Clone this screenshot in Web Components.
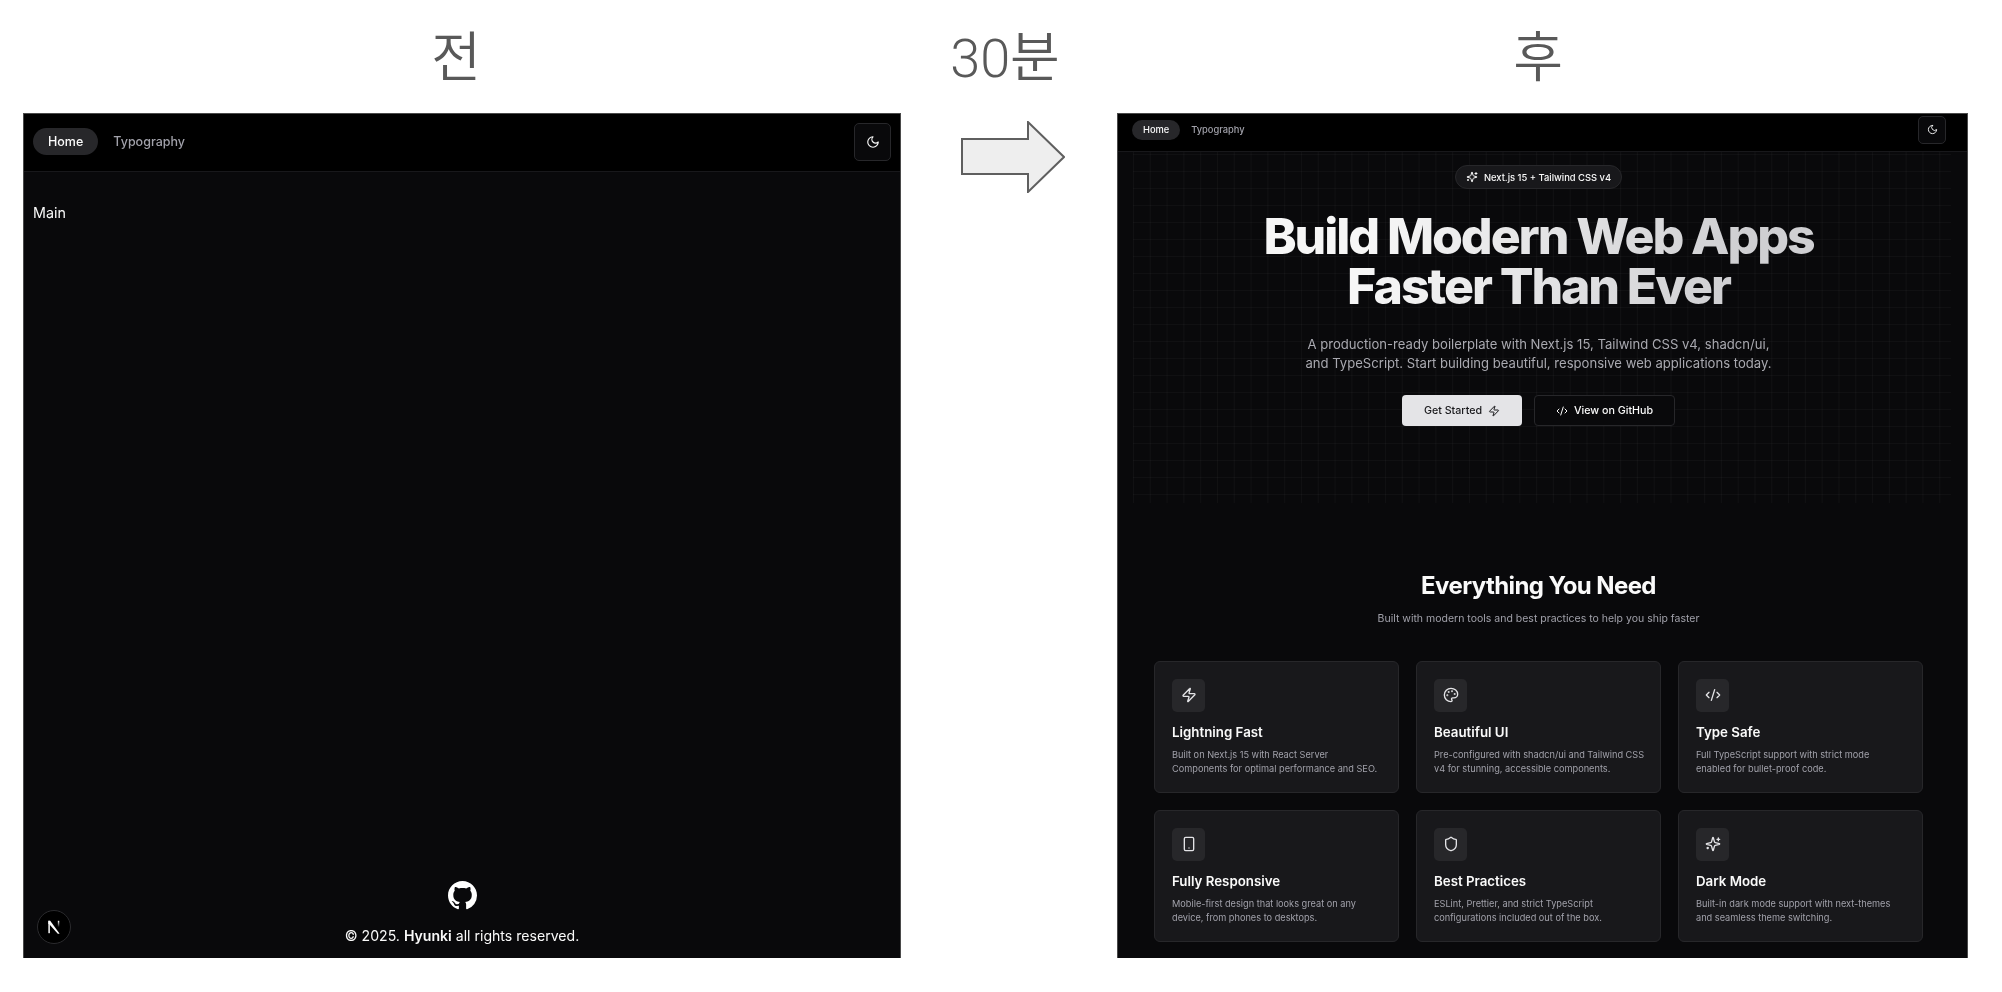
<!DOCTYPE html>
<html lang="ko">
<head>
<meta charset="utf-8">
<title>전 / 후</title>
<style>
  html, body { margin: 0; background: #fff; height: 100%; overflow: hidden; }
  body { font-family: Inter, "Noto Sans", sans-serif; }
</style>
</head>
<body>
<compare-page>
  <slide-caption slot="cap-before" style="--shift:-12px">전</slide-caption>
  <slide-caption slot="cap-mid" style="--shift:-8px">30분</slide-caption>
  <slide-caption slot="cap-after" style="--shift:-9px">후</slide-caption>
  <before-panel slot="before"></before-panel>
  <block-arrow slot="arrow"></block-arrow>
  <after-panel slot="after"></after-panel>
</compare-page>

<script>
const ICONS = {
  moon: '<path d="M12 3a6 6 0 0 0 9 9 9 9 0 1 1-9-9Z"/>',
  zap: '<path d="M4 14a1 1 0 0 1-.78-1.63l9.9-10.2a.5.5 0 0 1 .86.46l-1.92 6.02A1 1 0 0 0 13 10h7a1 1 0 0 1 .78 1.63l-9.9 10.2a.5.5 0 0 1-.86-.46l1.92-6.02A1 1 0 0 0 11 14z"/>',
  palette: '<circle cx="13.5" cy="6.5" r=".5" fill="currentColor"/><circle cx="17.5" cy="10.5" r=".5" fill="currentColor"/><circle cx="8.5" cy="7.5" r=".5" fill="currentColor"/><circle cx="6.5" cy="12.5" r=".5" fill="currentColor"/><path d="M12 2C6.5 2 2 6.5 2 12s4.5 10 10 10c.926 0 1.648-.746 1.648-1.688 0-.437-.18-.835-.437-1.125-.29-.289-.438-.652-.438-1.125a1.64 1.64 0 0 1 1.668-1.668h1.996c3.051 0 5.555-2.503 5.555-5.554C21.965 6.012 17.461 2 12 2z"/>',
  code: '<path d="m18 16 4-4-4-4"/><path d="m6 8-4 4 4 4"/><path d="m14.5 4-5 16"/>',
  phone: '<rect width="14" height="20" x="5" y="2" rx="2" ry="2"/><path d="M12 18h.01"/>',
  shield: '<path d="M20 13c0 5-3.5 7.5-7.66 8.95a1 1 0 0 1-.67-.01C7.5 20.5 4 18 4 13V6a1 1 0 0 1 1-1c2 0 4.5-1.2 6.24-2.72a1.17 1.17 0 0 1 1.52 0C14.51 3.81 17 5 19 5a1 1 0 0 1 1 1z"/>',
  sparkles: '<path d="M9.937 15.5A2 2 0 0 0 8.5 14.063l-6.135-1.582a.5.5 0 0 1 0-.962L8.5 9.936A2 2 0 0 0 9.937 8.5l1.582-6.135a.5.5 0 0 1 .963 0L14.063 8.5A2 2 0 0 0 15.5 9.937l6.135 1.581a.5.5 0 0 1 0 .964L15.5 14.063a2 2 0 0 0-1.437 1.437l-1.582 6.135a.5.5 0 0 1-.963 0z"/><path d="M20 3v4"/><path d="M22 5h-4"/><path d="M4 17v2"/><path d="M5 18H3"/>'
};

class UiIcon extends HTMLElement {
  connectedCallback() {
    const size = this.getAttribute("size") || 16;
    const name = this.getAttribute("name");
    this.attachShadow({ mode: "open" }).innerHTML = `
      <style>:host { display: inline-flex; flex: none; } svg { display: block; }</style>
      <svg xmlns="http://www.w3.org/2000/svg" width="${size}" height="${size}" viewBox="0 0 24 24" fill="none"
        stroke="currentColor" stroke-width="2" stroke-linecap="round" stroke-linejoin="round">${ICONS[name]}</svg>`;
  }
}
customElements.define("ui-icon", UiIcon);

class ComparePage extends HTMLElement {
  constructor() {
    super();
    this.attachShadow({ mode: "open" }).innerHTML = `
      <style>
        :host {
          display: grid;
          grid-template-columns: 878px 216px 851px;
          grid-template-rows: 113px 845px;
          padding-left: 23px;
        }
        .mid { display: flex; justify-content: flex-start; }
      </style>
      <slot name="cap-before"></slot>
      <slot name="cap-mid"></slot>
      <slot name="cap-after"></slot>
      <slot name="before"></slot>
      <div class="mid"><slot name="arrow"></slot></div>
      <slot name="after"></slot>`;
  }
}
customElements.define("compare-page", ComparePage);

class SlideCaption extends HTMLElement {
  constructor() {
    super();
    this.attachShadow({ mode: "open" }).innerHTML = `
      <style>
        :host {
          display: flex;
          justify-content: center;
          align-items: flex-start;
          padding-top: 23px;
          padding-right: calc(var(--shift) * -1);
          font: 350 54px/72px Roboto, "Noto Sans CJK KR", sans-serif;
          color: #595959;
        }
      </style>
      <slot></slot>`;
  }
}
customElements.define("slide-caption", SlideCaption);

class BlockArrow extends HTMLElement {
  constructor() {
    super();
    this.attachShadow({ mode: "open" }).innerHTML = `
      <style>
        :host { display: block; padding: 8px 0 0 60px; }
        svg { display: block; }
      </style>
      <svg xmlns="http://www.w3.org/2000/svg" width="104" height="72" viewBox="0 0 104 72">
        <path d="M1 18H67V1L103 36 67 71V53H1Z" fill="#eeeeee" stroke="#5f5f5f" stroke-width="2"/>
      </svg>`;
  }
}
customElements.define("block-arrow", BlockArrow);

// nav bar, sizes come from custom properties because it is used at two scales
class TopNav extends HTMLElement {
  constructor() {
    super();
    this.attachShadow({ mode: "open" }).innerHTML = `
      <style>
        :host {
          display: flex;
          align-items: center;
          justify-content: space-between;
          box-sizing: border-box;
          height: var(--nav-h);
          padding: 0 var(--nav-pr) var(--nav-pb) var(--nav-pl);
          background: #000;
          border-bottom: 1px solid #18181b;
          font-size: var(--nav-fs);
          font-weight: 500;
        }
        .links { display: flex; align-items: center; gap: var(--nav-gap); }
        a {
          display: block;
          height: var(--pill-h);
          line-height: var(--pill-h);
          padding: 0 var(--pill-px);
          border-radius: 999px;
          color: #a1a1aa;
        }
        a.on { background: #27272a; color: #fafafa; }
        button {
          display: flex;
          align-items: center;
          justify-content: center;
          width: var(--btn);
          height: var(--btn-h);
          padding: 0;
          color: #fafafa;
          background: #09090b;
          border: 1px solid #27272a;
          border-radius: 5px;
        }
      </style>
      <div class="links"><a class="on">Home</a><a>Typography</a></div>
      <button aria-label="Toggle theme"><slot></slot></button>`;
  }
}
customElements.define("top-nav", TopNav);

class BeforePanel extends HTMLElement {
  constructor() {
    super();
    this.attachShadow({ mode: "open" }).innerHTML = `
      <style>
        :host {
          display: flex;
          flex-direction: column;
          box-sizing: border-box;
          height: 845px;
          position: relative;
          border: 1px solid #4a4a4a;
          border-bottom: 0;
          background: #09090b;
          color: #fafafa;
          filter: blur(.3px);
        }
        top-nav {
          --nav-h: 58px; --nav-pl: 9px; --nav-pr: 9px; --nav-pb: 2px; --nav-fs: 12.5px; --nav-gap: 0px;
          --pill-h: 27px; --pill-px: 15px; --btn: 37px; --btn-h: 38px;
        }
        main { flex: 1; padding: 30px 9px 0; font-size: 14.3px; line-height: 22px; }
        footer {
          display: flex;
          flex-direction: column;
          align-items: center;
          gap: 15px;
          padding-bottom: 11px;
          font-size: 14.1px;
          line-height: 22px;
        }
        footer svg { display: block; }
        b { font-weight: 600; }
        .dev {
          position: absolute;
          left: 13px;
          bottom: 14px;
          width: 34px;
          height: 34px;
          box-sizing: border-box;
          border-radius: 50%;
          background: #000;
          border: 1px solid #2a2a2d;
          display: flex;
          align-items: center;
          justify-content: center;
        }
      </style>
      <top-nav><ui-icon name="moon" size="14"></ui-icon></top-nav>
      <main>Main</main>
      <footer>
        <svg xmlns="http://www.w3.org/2000/svg" width="29" height="29" viewBox="0 0 16 16" fill="#fff"><path d="M8 0C3.58 0 0 3.58 0 8c0 3.54 2.29 6.53 5.47 7.59.4.07.55-.17.55-.38 0-.19-.01-.82-.01-1.49-2.01.37-2.53-.49-2.69-.94-.09-.23-.48-.94-.82-1.13-.28-.15-.68-.52-.01-.53.63-.01 1.08.58 1.23.82.72 1.21 1.87.87 2.33.66.07-.52.28-.87.51-1.07-1.78-.2-3.64-.89-3.64-3.95 0-.87.31-1.59.82-2.15-.08-.2-.36-1.02.08-2.12 0 0 .67-.21 2.2.82.64-.18 1.32-.27 2-.27.68 0 1.36.09 2 .27 1.53-1.04 2.2-.82 2.2-.82.44 1.1.16 1.92.08 2.12.51.56.82 1.27.82 2.15 0 3.07-1.87 3.75-3.65 3.95.29.25.54.73.54 1.48 0 1.07-.01 1.93-.01 2.2 0 .21.15.46.55.38A8.013 8.013 0 0016 8c0-4.42-3.58-8-8-8z"/></svg>
        <div>© 2025. <b>Hyunki</b> all rights reserved.</div>
      </footer>
      <div class="dev">
        <svg xmlns="http://www.w3.org/2000/svg" width="18" height="18" viewBox="0 0 16 16">
          <defs><linearGradient id="fade" x1="0" y1="0" x2="0" y2="1"><stop offset="0" stop-color="#fff"/><stop offset=".8" stop-color="#fff" stop-opacity="0"/></linearGradient></defs>
          <path d="M3 2.5H4.6L13 14H11.4L3 4.6Z" fill="#fff"/>
          <rect x="3" y="2.5" width="1.3" height="11" fill="#fff"/>
          <rect x="11.4" y="2.5" width="1.3" height="7" fill="url(#fade)"/>
        </svg>
      </div>`;
  }
}
customElements.define("before-panel", BeforePanel);

class FeatureCard extends HTMLElement {
  connectedCallback() {
    this.attachShadow({ mode: "open" }).innerHTML = `
      <style>
        :host {
          display: block;
          box-sizing: border-box;
          height: 132px;
          padding: 16.5px 10px 16.5px 17px;
          background: #18181b;
          border: 1px solid #27272a;
          border-radius: 6px;
        }
        .box {
          display: flex;
          align-items: center;
          justify-content: center;
          width: 33px;
          height: 33px;
          border-radius: 5px;
          background: #27272a;
          color: #e4e4e7;
        }
        h3 { margin: 11px 0 7px; font-size: 13.3px; line-height: 18px; font-weight: 600; color: #fafafa; }
        p { margin: 0; font-size: 9.2px; line-height: 14px; color: #a1a1aa; white-space: nowrap; }
      </style>
      <div class="box"><ui-icon name="${this.getAttribute("icon")}" size="16"></ui-icon></div>
      <h3>${this.getAttribute("heading")}</h3>
      <p><slot></slot></p>`;
  }
}
customElements.define("feature-card", FeatureCard);

class HeroBlock extends HTMLElement {
  constructor() {
    super();
    this.attachShadow({ mode: "open" }).innerHTML = `
      <style>
        :host {
          display: flex;
          flex-direction: column;
          align-items: center;
          position: relative;
          box-sizing: border-box;
          height: 351px;
          padding-top: 13px;
        }
        .grid {
          position: absolute;
          inset: 0 8px 0 15px;
          background-image:
            linear-gradient(to right, rgba(255,255,255,.032) 1px, transparent 1px),
            linear-gradient(to bottom, rgba(255,255,255,.028) 1px, transparent 1px);
          background-size: 16.8px 17px;
          background-position: 0 2px;
        }
        .pill, h1, p, .actions { position: relative; }
        .pill {
          display: flex;
          align-items: center;
          gap: 6px;
          box-sizing: border-box;
          height: 24px;
          padding: 0 10px;
          border-radius: 999px;
          background: #18181b;
          border: 1px solid #27272a;
          font-size: 9.4px;
          font-weight: 500;
          color: #fafafa;
        }
        h1 {
          margin: 22px 0 0;
          font-size: 50px;
          line-height: 50px;
          font-weight: 800;
          letter-spacing: -2.1px;
          text-align: center;
          color: transparent;
          background: linear-gradient(100deg, #f6f6f6 20%, #cfcfd2 85%);
          -webkit-background-clip: text;
          background-clip: text;
        }
        p { margin: 24px 0 0; font-size: 13.1px; line-height: 19px; text-align: center; color: #a9a9b0; }
        .actions { display: flex; gap: 12px; margin-top: 22px; }
        .btn {
          display: flex;
          align-items: center;
          justify-content: center;
          gap: 6px;
          box-sizing: border-box;
          height: 31px;
          border-radius: 4px;
          font-size: 10.7px;
          font-weight: 500;
        }
        .primary { width: 120px; background: #e4e4e7; color: #18181b; }
        .ghost { width: 141px; background: #09090b; color: #fafafa; border: 1px solid #27272a; }
      </style>
      <div class="grid"></div>
      <div class="pill"><ui-icon name="sparkles" size="12"></ui-icon>Next.js 15 + Tailwind CSS v4</div>
      <h1>Build Modern Web Apps<br>Faster Than Ever</h1>
      <p>A production-ready boilerplate with Next.js 15, Tailwind CSS v4, shadcn/ui,<br>and TypeScript. Start building beautiful, responsive web applications today.</p>
      <div class="actions">
        <div class="btn primary">Get Started <ui-icon name="zap" size="12"></ui-icon></div>
        <div class="btn ghost"><ui-icon name="code" size="12"></ui-icon>View on GitHub</div>
      </div>`;
  }
}
customElements.define("hero-block", HeroBlock);

class FeatureSection extends HTMLElement {
  constructor() {
    super();
    this.attachShadow({ mode: "open" }).innerHTML = `
      <style>
        :host { display: block; padding: 68px 36px 0; }
        h2 { margin: 0; font-size: 24px; line-height: 30px; font-weight: 700; letter-spacing: -.6px; text-align: center; color: #fafafa; }
        .sub { margin: 10px 0 34px; font-size: 10.5px; line-height: 16px; text-align: center; color: #a1a1aa; }
        .cards { display: grid; grid-template-columns: repeat(3, 245px); gap: 17px; }
      </style>
      <h2>Everything You Need</h2>
      <div class="sub">Built with modern tools and best practices to help you ship faster</div>
      <div class="cards"><slot></slot></div>`;
  }
}
customElements.define("feature-section", FeatureSection);

class AfterPanel extends HTMLElement {
  constructor() {
    super();
    this.attachShadow({ mode: "open" }).innerHTML = `
      <style>
        :host {
          display: block;
          box-sizing: border-box;
          height: 845px;
          overflow: hidden;
          border: 1px solid #4a4a4a;
          border-bottom: 0;
          background: #09090b;
          color: #fafafa;
          filter: blur(.3px);
        }
        top-nav {
          --nav-h: 38px; --nav-pl: 14px; --nav-pr: 21px; --nav-pb: 6px; --nav-fs: 9.3px; --nav-gap: 0px;
          --pill-h: 20px; --pill-px: 11px; --btn: 28px; --btn-h: 28px;
        }
        .content { width: 841px; }
      </style>
      <top-nav><ui-icon name="moon" size="11"></ui-icon></top-nav>
      <div class="content">
        <hero-block></hero-block>
        <feature-section>
          <feature-card icon="zap" heading="Lightning Fast">Built on Next.js 15 with React Server<br>Components for optimal performance and SEO.</feature-card>
          <feature-card icon="palette" heading="Beautiful UI">Pre-configured with shadcn/ui and Tailwind CSS<br>v4 for stunning, accessible components.</feature-card>
          <feature-card icon="code" heading="Type Safe">Full TypeScript support with strict mode<br>enabled for bullet-proof code.</feature-card>
          <feature-card icon="phone" heading="Fully Responsive">Mobile-first design that looks great on any<br>device, from phones to desktops.</feature-card>
          <feature-card icon="shield" heading="Best Practices">ESLint, Prettier, and strict TypeScript<br>configurations included out of the box.</feature-card>
          <feature-card icon="sparkles" heading="Dark Mode">Built-in dark mode support with next-themes<br>and seamless theme switching.</feature-card>
        </feature-section>
      </div>`;
  }
}
customElements.define("after-panel", AfterPanel);
</script>
</body>
</html>
